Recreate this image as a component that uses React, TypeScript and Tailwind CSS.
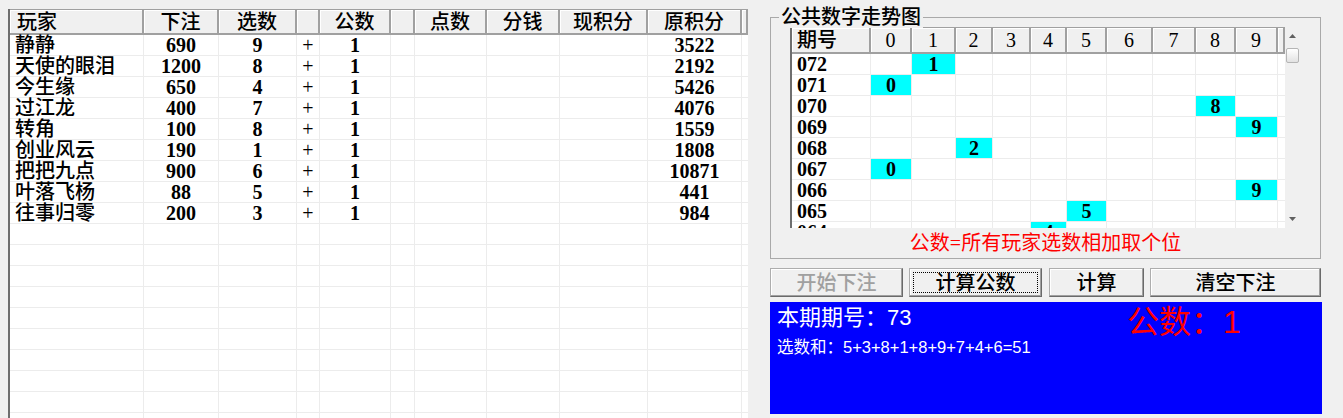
const hdr =
  "flex items-center h-full shrink-0 bg-[#f0f0f0] border-r-2 border-b-2 border-[#a0a0a0] shadow-[inset_1px_1px_0_#ffffff] text-[20px] font-medium";
const cell = "flex items-center h-full shrink-0 border-r border-b border-[#ececec]";

const cols = [
  { w: "w-[134px]", h: "justify-start pl-[7px]", d: "justify-start pl-[5px] font-medium" },
  { w: "w-[75px]", h: "justify-center", d: "justify-center font-bold" },
  { w: "w-[78px]", h: "justify-center", d: "justify-center font-bold" },
  { w: "w-[23px]", h: "justify-center", d: "justify-center" },
  { w: "w-[71px]", h: "justify-center", d: "justify-center font-bold" },
  { w: "w-[24px]", h: "justify-center", d: "justify-center" },
  { w: "w-[72px]", h: "justify-center", d: "justify-center" },
  { w: "w-[73px]", h: "justify-center", d: "justify-center" },
  { w: "w-[88px]", h: "justify-center", d: "justify-center" },
  { w: "w-[94px]", h: "justify-center", d: "justify-center font-bold" },
];

const heads = ["玩家", "下注", "选数", "", "公数", "", "点数", "分钱", "现积分", "原积分"];

const players = [
  ["静静", "690", "9", "3522"],
  ["天使的眼泪", "1200", "8", "2192"],
  ["今生缘", "650", "4", "5426"],
  ["过江龙", "400", "7", "4076"],
  ["转角", "100", "8", "1559"],
  ["创业风云", "190", "1", "1808"],
  ["把把九点", "900", "6", "10871"],
  ["叶落飞杨", "88", "5", "441"],
  ["往事归零", "200", "3", "984"],
];

const gw = ["w-[41px]", "w-[44px]", "w-[37px]", "w-[38px]", "w-[36px]", "w-[40px]", "w-[46px]", "w-[43px]", "w-[40px]", "w-[42px]"];

const trend = [
  { p: "072", v: 1 },
  { p: "071", v: 0 },
  { p: "070", v: 8 },
  { p: "069", v: 9 },
  { p: "068", v: 2 },
  { p: "067", v: 0 },
  { p: "066", v: 9 },
  { p: "065", v: 5 },
  { p: "064", v: 4 },
];

function PlayerTable() {
  const rows: string[][] = [];
  for (let i = 0; i < 19; i++) {
    const p = players[i];
    rows.push(p ? [p[0], p[1], p[2], "+", "1", "", "", "", "", p[3]] : ["", "", "", "", "", "", "", "", "", ""]);
  }
  return (
    <div className="mt-[9px] ml-[8px] w-[740px] h-[409px] shrink-0 border-l-2 border-[#6e6e6e] bg-white overflow-hidden flex flex-col">
      <div className="flex h-[26px] shrink-0 border-t border-[#a0a0a0]">
        {cols.map((c, i) => (
          <div key={i} className={`${c.w} ${c.h} ${hdr}`}>
            {heads[i]}
          </div>
        ))}
        <div className={`flex-1 ${hdr}`} />
      </div>
      {rows.map((r, i) => (
        <div key={i} className="flex h-[21px] shrink-0 text-[20px] leading-[21px]">
          {cols.map((c, j) => (
            <div key={j} className={`${c.w} ${c.d} ${cell}`}>
              {r[j]}
            </div>
          ))}
          <div className="flex-1 h-full border-b border-[#ececec]" />
        </div>
      ))}
    </div>
  );
}

function ScrollBar() {
  return (
    <div className="w-[15px] h-full shrink-0 bg-[#f0f0f0] flex flex-col items-center">
      <div className="h-[18px] w-full flex items-center justify-center">
        <svg width="7" height="4" viewBox="0 0 7 4">
          <path d="M0 4 L3.5 0 L7 4 Z" fill="#606060" />
        </svg>
      </div>
      <div className="w-[13px] h-[15px] mt-[3px] rounded-[2px] border border-[#b5b5b5] bg-linear-to-b from-white to-[#e2e2e2]" />
      <div className="flex-1" />
      <div className="h-[18px] w-full flex items-center justify-center">
        <svg width="7" height="4" viewBox="0 0 7 4">
          <path d="M0 0 L7 0 L3.5 4 Z" fill="#606060" />
        </svg>
      </div>
    </div>
  );
}

function TrendGrid() {
  return (
    <div className="flex w-[510px] h-[201px] border-l-2 border-[#6e6e6e] bg-white overflow-hidden">
      <div className="flex-1 flex flex-col overflow-hidden">
        <div className="flex h-[27px] shrink-0 border-t border-[#a0a0a0]">
          <div className={`w-[79px] justify-start pl-[5px] ${hdr}`}>期号</div>
          {gw.map((w, i) => (
            <div key={i} className={`${w} justify-center ${hdr}`}>
              {i}
            </div>
          ))}
          <div className={`flex-1 ${hdr}`} />
        </div>
        {trend.map((r) => (
          <div key={r.p} className="flex h-[21px] shrink-0 text-[20px] leading-[21px] font-bold">
            <div className={`w-[79px] pl-[5px] ${cell}`}>{r.p}</div>
            {gw.map((w, i) => (
              <div key={i} className={`${w} justify-center ${cell} ${i === r.v ? "bg-[#00ffff]" : ""}`}>
                {i === r.v ? i : ""}
              </div>
            ))}
            <div className="flex-1 h-full border-b border-[#ececec]" />
          </div>
        ))}
      </div>
      <ScrollBar />
    </div>
  );
}

const btn =
  "h-[29px] shrink-0 flex items-center justify-center bg-[#f0f0f0] border border-[#adadad] border-r-[#6a6a6a] border-b-[#6a6a6a] shadow-[inset_-1px_-1px_0_#a0a0a0,inset_1px_1px_0_#ffffff] text-[20px] font-medium";

export default function App() {
  return (
    <div className="w-[1343px] h-[418px] bg-[#f0f0f0] flex overflow-hidden text-black font-['Liberation_Serif','Noto_Sans_CJK_SC',serif]">
      <PlayerTable />
      <div className="ml-[22px] w-[552px] flex flex-col">
        <div className="relative mt-[17px] w-[551px] h-[242px] border border-[#a9a9a9] pl-[19px] pr-[19px] pt-[9px]">
          <span className="absolute -top-[12px] left-[8px] bg-[#f0f0f0] px-[2px] text-[20px] leading-[22px] font-medium">
            公共数字走势图
          </span>
          <TrendGrid />
          <div className="h-[30px] flex items-center justify-center text-[20px] text-[#ff0000]">
            公数=所有玩家选数相加取个位
          </div>
        </div>
        <div className="mt-[9px] flex">
          <div className={`w-[133px] text-[#a0a0a0] ${btn}`}>开始下注</div>
          <div className={`ml-[6px] w-[133px] p-[3px] border-[#4a4a4a] border-r-[#3a3a3a] border-b-[#3a3a3a] ${btn}`}>
            <div className="w-full h-full flex items-center justify-center border border-dotted border-black">计算公数</div>
          </div>
          <div className={`ml-[7px] w-[95px] ${btn}`}>计算</div>
          <div className={`ml-[6px] w-[171px] ${btn}`}>清空下注</div>
        </div>
        <div className="mt-[5px] w-[552px] h-[112px] bg-[#0000ff] pl-[7px] pt-[2px] grid grid-cols-[350px_1fr] content-start font-['Liberation_Sans','Noto_Sans_CJK_SC',sans-serif]">
          <div className="text-white text-[22px] leading-[28px]">本期期号：73</div>
          <div className="row-span-2 text-[#ff0000] text-[32px] leading-[36px]">公数：1</div>
          <div className="text-white text-[16.5px] leading-[26px] mt-[2px]">选数和：5+3+8+1+8+9+7+4+6=51</div>
        </div>
      </div>
    </div>
  );
}
